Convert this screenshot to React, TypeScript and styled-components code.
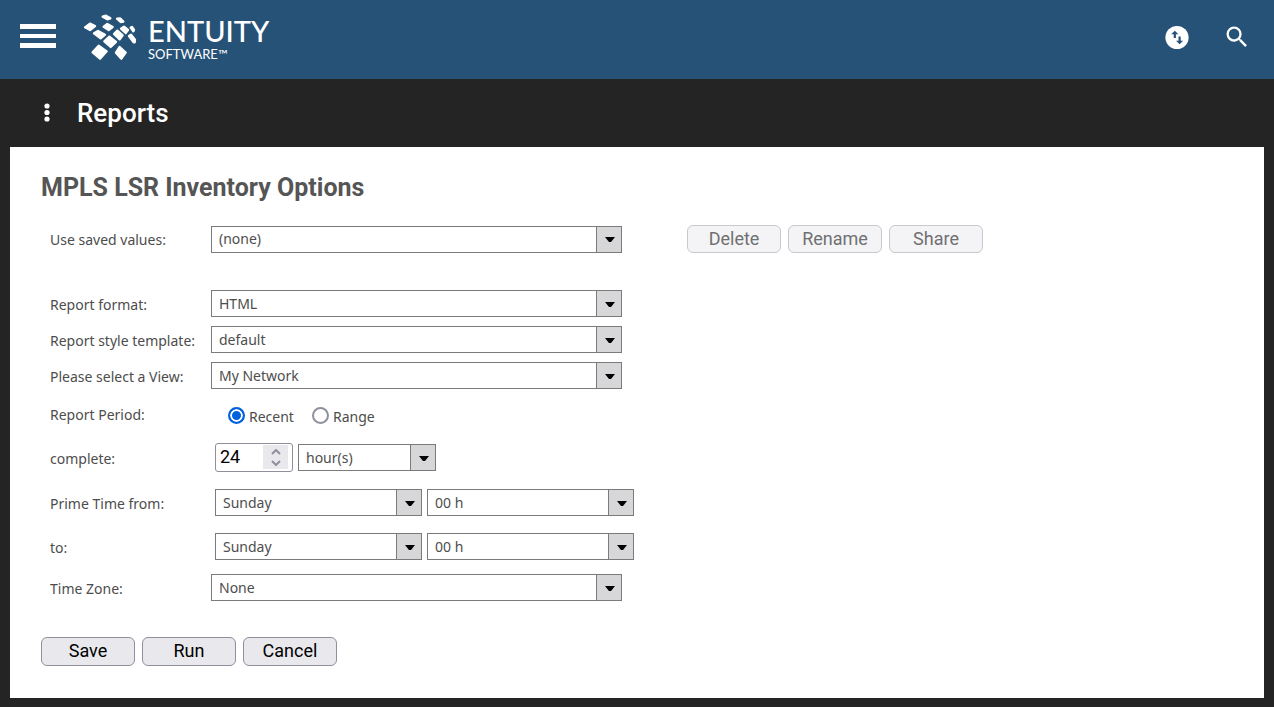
import React, { useId, useState } from "react";
import styled, { createGlobalStyle } from "styled-components";
import { MdSearch } from "react-icons/md";

const GlobalStyle = createGlobalStyle`
  * { box-sizing: border-box; }
  body {
    margin: 0;
    background: #242424;
    color: #4d4d4d;
    font-family: "Noto Sans", sans-serif;
    font-size: 14px;
    line-height: 20px;
  }
`;

const TopBar = styled.header`
  display: flex;
  align-items: center;
  height: 79px;
  padding: 0 23px 6px 20px;
  background: #265277;
  color: #fff;
`;

const IconButton = styled.button`
  display: flex;
  padding: 0;
  border: 0;
  background: none;
  color: inherit;
  cursor: pointer;
`;

const Brand = styled.a`
  display: flex;
  align-items: center;
  gap: 11px;
  margin-left: 28px;
  color: #fff;
  text-decoration: none;
  font-family: Lato, sans-serif;
`;

const BrandText = styled.span`
  display: flex;
  flex-direction: column;
  padding-top: 4px;
`;

const BrandName = styled.span`
  font-size: 29px;
  font-weight: 500;
  line-height: 30px;
`;

const BrandSub = styled.span`
  font-size: 13px;
  line-height: 16px;
`;

const Tools = styled.div`
  display: flex;
  align-items: center;
  gap: 32px;
  margin-left: auto;
`;

const PageBar = styled.div`
  display: flex;
  align-items: center;
  gap: 27px;
  height: 68px;
  padding: 0 44px;
  color: #fff;
`;

const PageTitle = styled.h1`
  margin: 0;
  font: 500 26px/32px Roboto, sans-serif;
`;

const Card = styled.main`
  margin: 0 10px 9px;
  padding: 25px 31px 32px;
  background: #fff;
`;

const FormTitle = styled.h2`
  margin: 0 0 21px;
  font: 700 25px/32px Roboto, sans-serif;
  color: #555;
`;

const Row = styled.div<{ $after: number; $height?: number }>`
  display: flex;
  align-items: center;
  min-height: ${(p) => p.$height ?? 27}px;
  margin-bottom: ${(p) => p.$after}px;
`;

const RowLabel = styled.label`
  flex: none;
  width: 170px;
  padding: 2px 0 0 9px;
`;

const GroupLabel = styled.span`
  flex: none;
  width: 170px;
  padding: 0 0 2px 9px;
`;

const Controls = styled.div<{ $indent?: number }>`
  display: flex;
  align-items: center;
  gap: 5px;
  padding-left: ${(p) => p.$indent ?? 0}px;
`;

const SelectBox = styled.span<{ $width: number }>`
  display: grid;
  grid-template-columns: 1fr 26px;
  width: ${(p) => p.$width}px;
  height: 27px;
`;

const NativeSelect = styled.select`
  grid-area: 1 / 1 / 2 / 3;
  appearance: none;
  width: 100%;
  margin: 0;
  padding: 0 32px 0 7px;
  border: 1px solid #7b7b7b;
  border-radius: 0;
  background: #fff;
  color: inherit;
  font: inherit;
`;

const SelectArrow = styled.span`
  grid-area: 1 / 2;
  display: flex;
  align-items: center;
  justify-content: center;
  padding: 1px 0 0 1px;
  border: 1px solid #7b7b7b;
  background: #d7d7d9;
  pointer-events: none;
  z-index: 1;
`;

const RadioLabel = styled.label`
  display: flex;
  align-items: center;
  gap: 4px;
  margin-right: 13px;
`;

const RadioText = styled.span`
  padding-top: 2px;
`;

const Radio = styled.input`
  appearance: none;
  width: 17px;
  height: 17px;
  margin: 0;
  border: 2px solid #8f8f9d;
  border-radius: 50%;
  background: #fff;
  &:checked {
    border-color: #0060df;
    background: #0060df;
    box-shadow: inset 0 0 0 2px #fff;
  }
`;

const NumberBox = styled.span`
  display: flex;
  width: 78px;
  height: 29px;
  padding: 1px 4px 2px;
  border: 1px solid #8f8f9d;
  border-radius: 3px;
  background: #fff;
`;

const NumberInput = styled.input`
  flex: 1;
  min-width: 0;
  padding: 0;
  border: 0;
  outline: 0;
  color: #000;
  font: 18px/24px Roboto, sans-serif;
  appearance: textfield;
  &::-webkit-inner-spin-button {
    appearance: none;
    margin: 0;
  }
`;

const Spinner = styled.span`
  display: flex;
  flex-direction: column;
  width: 25px;
  padding: 1px 0;
  background: #e9e9ed;
`;

const SpinButton = styled.button`
  flex: 1;
  display: flex;
  align-items: center;
  justify-content: center;
  padding: 0;
  border: 0;
  background: none;
`;

const Buttons = styled.div<{ $indent?: number }>`
  display: flex;
  gap: 7px;
  padding-left: ${(p) => p.$indent ?? 0}px;
`;

const Button = styled.button`
  width: 94px;
  height: 29px;
  padding: 0 0 2px;
  border: 1px solid #8f8f9d;
  border-radius: 6px;
  background: #e9e9ed;
  color: #000;
  font: 18px/24px Roboto, sans-serif;
  &:disabled {
    height: 28px;
    padding: 0;
    border-color: #c8c8cf;
    background: #f4f4f6;
    color: #707072;
  }
`;

function Select({ id, label, width, options }: { id?: string; label?: string; width: number; options: string[] }) {
  return (
    <SelectBox $width={width}>
      <NativeSelect id={id} aria-label={label}>
        {options.map((o) => (
          <option key={o}>{o}</option>
        ))}
      </NativeSelect>
      <SelectArrow>
        <svg width="10" height="5" viewBox="0 0 10 5" aria-hidden="true">
          <path d="M0 0H10L6 5H4Z" fill="#000" />
        </svg>
      </SelectArrow>
    </SelectBox>
  );
}

function SelectRow({ label, options, after }: { label: string; options: string[]; after: number }) {
  const id = useId();
  return (
    <Row $after={after}>
      <RowLabel htmlFor={id}>{label}</RowLabel>
      <Select id={id} width={411} options={options} />
    </Row>
  );
}

const days = ["Sunday", "Monday", "Tuesday", "Wednesday", "Thursday", "Friday", "Saturday"];
const hours = Array.from({ length: 24 }, (_, i) => `${String(i).padStart(2, "0")} h`);

function TimeRow({ label, after }: { label: string; after: number }) {
  const id = useId();
  return (
    <Row $after={after}>
      <RowLabel htmlFor={id}>{label}</RowLabel>
      <Controls $indent={4}>
        <Select id={id} width={207} options={days} />
        <Select label="Hour" width={207} options={hours} />
      </Controls>
    </Row>
  );
}

function LogoMark() {
  return (
    <svg width="53" height="46" viewBox="18 18 159 138" fill="#fff" stroke="#fff" strokeWidth="7" strokeLinejoin="round" aria-hidden="true">
      <path d="M74 26L84 23L97 31L88 34Z" />
      <path d="M117 32L126 31L136 41L128 42Z" />
      <path d="M21 58L36 47L51 54L36 66Z" />
      <path d="M77 56L88 48L104 57L92 66Z" />
      <path d="M129 62L138 56L150 66L143 75Z" />
      <path d="M158 59L162 57L168 66L166 70Z" />
      <path d="M48 76L60 69L81 80L68 91Z" />
      <path d="M108 78L118 68L134 82L125 94Z" />
      <path d="M153 84L159 80L171 95L170 103L167 103Z" />
      <path d="M79 100L94 86L114 102L98 117Z" />
      <path d="M44 133L62 113L86 130L66 152Z" />
      <path d="M114 134L125 117L143 134L130 152Z" />
    </svg>
  );
}

export default function App() {
  const [amount, setAmount] = useState(24);
  return (
    <>
      <GlobalStyle />
      <TopBar>
        <IconButton aria-label="Menu">
          <svg width="36" height="25" viewBox="0 0 36 25" fill="#fff" aria-hidden="true">
            <path d="M0 0H36V5H0ZM0 10H36V14H0ZM0 19H36V24H0Z" />
          </svg>
        </IconButton>
        <Brand href="#">
          <LogoMark />
          <BrandText>
            <BrandName>ENTUITY</BrandName>
            <BrandSub>SOFTWARE™</BrandSub>
          </BrandText>
        </Brand>
        <Tools>
          <IconButton aria-label="Transfers">
            <svg width="28" height="28" viewBox="0 0 28 28" fill="#265277" aria-hidden="true">
              <circle cx="14" cy="14.500" r="11.600" fill="#fff" />
              <path d="M11.800 7.700L15.400 11.200H12.900V14.900H10.700V11.200H8.200Z" />
              <path d="M16.600 21.200L13 17.700H15.500V13.500H17.700V17.700H20.200Z" />
            </svg>
          </IconButton>
          <IconButton aria-label="Search">
            <MdSearch size={28} />
          </IconButton>
        </Tools>
      </TopBar>
      <PageBar>
        <IconButton aria-label="Page menu">
          <svg width="6" height="20" viewBox="0 0 6 20" fill="#fff" aria-hidden="true">
            <circle cx="3" cy="3" r="2.600" />
            <circle cx="3" cy="9.500" r="2.600" />
            <circle cx="3" cy="16" r="2.600" />
          </svg>
        </IconButton>
        <PageTitle>Reports</PageTitle>
      </PageBar>
      <Card>
        <FormTitle>MPLS LSR Inventory Options</FormTitle>
        <form onSubmit={(e) => e.preventDefault()}>
          <Row $after={37} $height={28}>
            <RowLabel htmlFor="saved">Use saved values:</RowLabel>
            <Select id="saved" width={411} options={["(none)"]} />
            <Buttons $indent={65}>
              <Button type="button" disabled>Delete</Button>
              <Button type="button" disabled>Rename</Button>
              <Button type="button" disabled>Share</Button>
            </Buttons>
          </Row>
          <SelectRow label="Report format:" options={["HTML"]} after={9} />
          <SelectRow label="Report style template:" options={["default"]} after={9} />
          <SelectRow label="Please select a View:" options={["My Network"]} after={14} />
          <Row $after={15} $height={25} role="radiogroup" aria-labelledby="period">
            <GroupLabel id="period">Report Period:</GroupLabel>
            <Controls $indent={17}>
              <RadioLabel>
                <Radio type="radio" name="period" defaultChecked />
                <RadioText>Recent</RadioText>
              </RadioLabel>
              <RadioLabel>
                <Radio type="radio" name="period" />
                <RadioText>Range</RadioText>
              </RadioLabel>
            </Controls>
          </Row>
          <Row $after={17} $height={29}>
            <RowLabel htmlFor="amount">complete:</RowLabel>
            <Controls $indent={4}>
              <NumberBox>
                <NumberInput id="amount" type="number" value={amount} onChange={(e) => setAmount(Number(e.target.value))} />
                <Spinner>
                  <SpinButton type="button" aria-label="Increase" onClick={() => setAmount(amount + 1)}>
                    <svg width="10" height="6" viewBox="0 0 10 6" fill="none" stroke="#8f8f9d" strokeWidth="2" aria-hidden="true">
                      <path d="M1 5L5 1L9 5" />
                    </svg>
                  </SpinButton>
                  <SpinButton type="button" aria-label="Decrease" onClick={() => setAmount(amount - 1)}>
                    <svg width="10" height="6" viewBox="0 0 10 6" fill="none" stroke="#8f8f9d" strokeWidth="2" aria-hidden="true">
                      <path d="M1 1L5 5L9 1" />
                    </svg>
                  </SpinButton>
                </Spinner>
              </NumberBox>
              <Select label="Unit" width={138} options={["hour(s)", "day(s)", "week(s)", "month(s)"]} />
            </Controls>
          </Row>
          <TimeRow label="Prime Time from:" after={17} />
          <TimeRow label="to:" after={14} />
          <SelectRow label="Time Zone:" options={["None"]} after={36} />
          <Buttons>
            <Button type="submit">Save</Button>
            <Button type="button">Run</Button>
            <Button type="button">Cancel</Button>
          </Buttons>
        </form>
      </Card>
    </>
  );
}
